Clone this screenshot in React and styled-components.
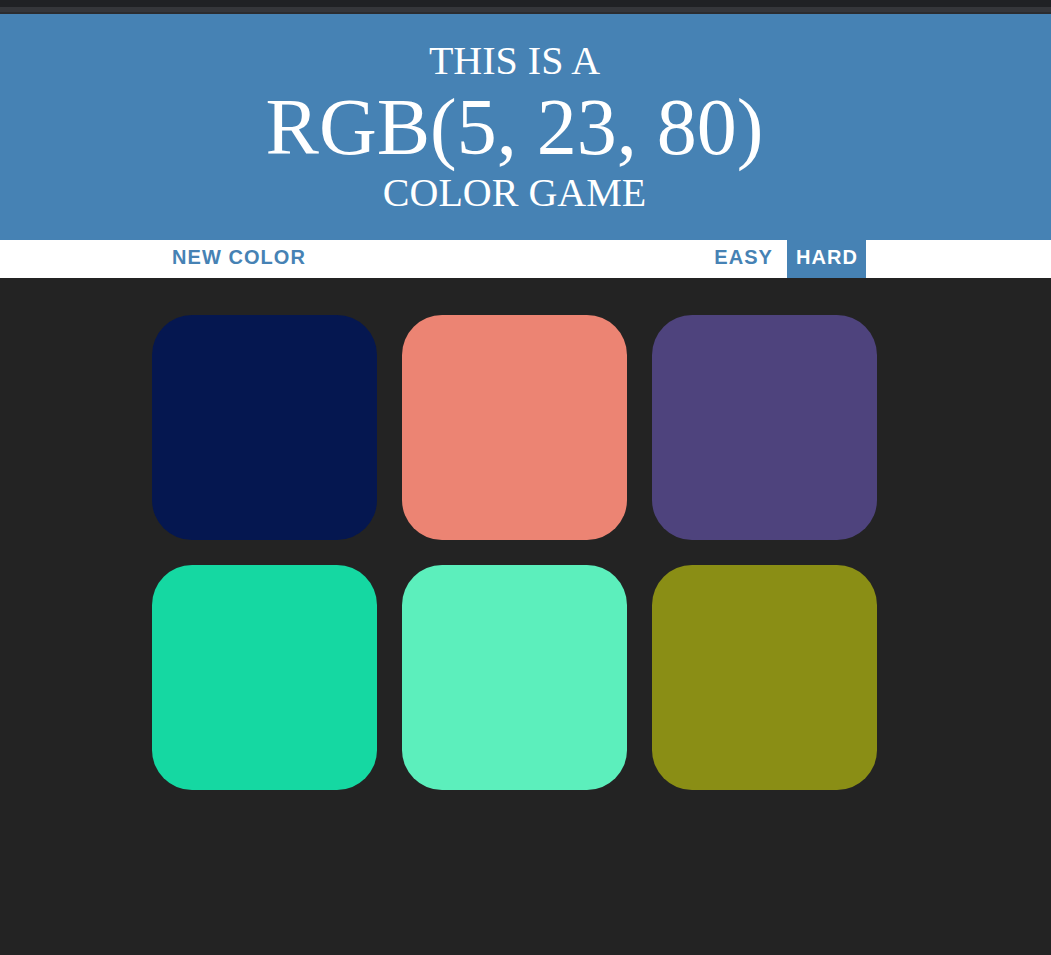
import React, { useState } from 'react';
import styled, { createGlobalStyle } from 'styled-components';

const GlobalStyle = createGlobalStyle`
  body {
    margin: 0;
    background: #232323;
    font-family: "Liberation Serif", "Times New Roman", serif;
  }
`;

const TopBar = styled.div`
  height: 7px;
  background: #202124;
  border-bottom: 5px solid #35363a;
  box-shadow: 0 2px 0 #2b2c2f;
  margin-bottom: 2px;
`;

const Header = styled.h1`
  margin: 0;
  padding: 25px 22px 25px 0;
  background: steelblue;
  color: #fff;
  text-align: center;
  text-transform: uppercase;
  font-weight: normal;
`;

const Line = styled.span`
  display: block;
  font-size: ${props => props.big ? '80px' : '40px'};
  line-height: ${props => props.big ? '88px' : '44px'};
`;

const Stripe = styled.div`
  height: 38px;
  background: #fff;
  padding-right: 22px;
  display: flex;
  justify-content: center;
`;

const StripeInner = styled.div`
  width: 703px;
  display: flex;
  justify-content: space-between;
`;

const Group = styled.div`
  display: flex;
  gap: 6px;
`;

const Button = styled.button`
  border: none;
  height: 100%;
  padding: 0 8px 3px 9px;
  display: flex;
  align-items: center;
  background: ${props => props.selected ? 'steelblue' : 'none'};
  color: ${props => props.selected ? '#fff' : 'steelblue'};
  font-family: "Liberation Sans", Arial, sans-serif;
  font-weight: 700;
  font-size: 20px;
  letter-spacing: 1.05px;
  text-transform: uppercase;
  outline: none;
  cursor: pointer;
`;

const Board = styled.div`
  padding: 37px 22px 0 0;
  display: flex;
  justify-content: center;
`;

const Grid = styled.div`
  width: 725px;
  display: grid;
  grid-template-columns: repeat(3, 225px);
  gap: 25px;
`;

const Square = styled.div`
  height: 225px;
  border-radius: 40px;
  background: ${props => props.color};
`;

const colors = [
  'rgb(5, 23, 80)',
  'rgb(236, 132, 115)',
  'rgb(78, 67, 125)',
  'rgb(21, 216, 162)',
  'rgb(92, 239, 188)',
  'rgb(138, 142, 21)',
];

export default function App() {
  const [mode, setMode] = useState('hard');
  return (
    <>
      <GlobalStyle />
      <TopBar />
      <Header>
        <Line>This is a</Line>
        <Line big>RGB(5, 23, 80)</Line>
        <Line>Color Game</Line>
      </Header>
      <Stripe>
        <StripeInner>
          <Button>New Color</Button>
          <Group>
            <Button selected={mode === 'easy'} onClick={() => setMode('easy')}>Easy</Button>
            <Button selected={mode === 'hard'} onClick={() => setMode('hard')}>Hard</Button>
          </Group>
        </StripeInner>
      </Stripe>
      <Board>
        <Grid>
          {colors.map((c, i) => <Square key={i} color={c} />)}
        </Grid>
      </Board>
    </>
  );
}
